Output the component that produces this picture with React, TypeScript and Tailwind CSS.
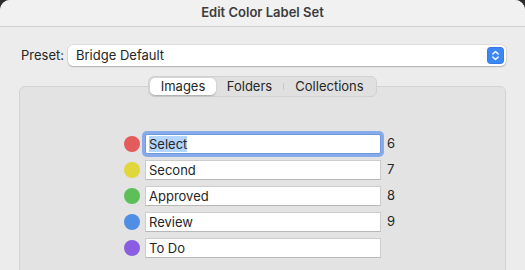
import React from 'react'

const labels = [
  { name: 'Select', color: '#e45b5c', key: '6' },
  { name: 'Second', color: '#e1d73c', key: '7' },
  { name: 'Approved', color: '#5cbf58', key: '8' },
  { name: 'Review', color: '#4f8ee4', key: '9' },
  { name: 'To Do', color: '#8b5de1', key: '' },
]

function Stepper() {
  return (
    <div className="w-[17px] h-[17px] rounded-[4px] bg-[#3b87f5] flex items-center justify-center shadow-[inset_0_0_0_0.5px_rgba(0,0,0,0.15)]">
      <svg width="9" height="13" viewBox="0 0 9 13" fill="none">
        <path d="M1.8 5 L4.5 2.4 L7.2 5" stroke="white" strokeWidth="1.4" strokeLinecap="round" strokeLinejoin="round" />
        <path d="M1.8 8 L4.5 10.6 L7.2 8" stroke="white" strokeWidth="1.4" strokeLinecap="round" strokeLinejoin="round" />
      </svg>
    </div>
  )
}

function Tabs() {
  return (
    <div className="flex items-stretch h-[21px] rounded-[6px] bg-[#e0e0e0] border border-[#d2d2d2] text-[13px] text-[#262626] p-[1px]">
      <div className="w-[66px] bg-white rounded-[5px] shadow-[0_0.5px_1.5px_rgba(0,0,0,0.25)] flex items-center justify-center">
        Images
      </div>
      <div className="w-[67px] flex items-center justify-center">Folders</div>
      <div className="w-px my-[5px] bg-[#c9c9c9]" />
      <div className="w-[91px] flex items-center justify-center">Collections</div>
    </div>
  )
}

function LabelRow({ name, color, keyNum, focused }: { name: string; color: string; keyNum: string; focused: boolean }) {
  return (
    <div className="flex items-center h-[20px]">
      <div className="w-[16px] h-[16px] rounded-full" style={{ backgroundColor: color }} />
      <div
        className={
          focused
            ? 'ml-[5px] w-[236px] h-[20px] bg-white rounded-[2px] ring-[3px] ring-[#85abea] border border-[#6f98de] flex items-center px-[3px]'
            : 'ml-[5px] w-[236px] h-[20px] bg-white border border-[#cccccc] border-b-[#b8b8b8] flex items-center px-[3px]'
        }
      >
        {focused ? (
          <span className="bg-[#b4d5fe] leading-[16px]">{name}</span>
        ) : (
          <span className="leading-[16px]">{name}</span>
        )}
      </div>
      <div className="ml-[6px] w-[10px]">{keyNum}</div>
    </div>
  )
}

export default function App() {
  return (
    <div className="w-[525px] h-[270px] bg-[#2b2b2b] overflow-hidden" style={{ fontFamily: 'Inter, "Liberation Sans", sans-serif' }}>
      <div className="w-full h-full bg-[#ececec] rounded-t-[10px] flex flex-col text-[13px] text-[#262626]">
        <div className="h-[27px] shrink-0 bg-[#f2f1f1] rounded-t-[10px] border-b border-[#cfcfcf] flex items-center justify-center font-semibold text-[#3c3c3c] text-[13px]">
          Edit Color Label Set
        </div>
        <div className="px-[19px] pt-[18px] flex flex-col">
          <div className="flex items-center h-[21px]">
            <div className="ml-[2px] w-[47px]">Preset:</div>
            <div className="flex-1 h-[21px] bg-white rounded-[5px] shadow-[0_0_0_0.5px_rgba(0,0,0,0.12),0_1px_1.5px_rgba(0,0,0,0.2)] flex items-center pl-[8px] pr-[2px]">
              <div className="flex-1">Bridge Default</div>
              <Stepper />
            </div>
          </div>
          <div className="mt-[20px] h-[200px] bg-[#e3e3e3] border border-[#d3d3d3] rounded-[6px] flex flex-col">
            <div className="-mt-[11px] flex justify-center">
              <Tabs />
            </div>
            <div className="mt-[37px] pl-[104px] flex flex-col gap-[6px]">
              {labels.map((l, i) => (
                <LabelRow key={l.name} name={l.name} color={l.color} keyNum={l.key} focused={i === 0} />
              ))}
            </div>
          </div>
        </div>
      </div>
    </div>
  )
}
